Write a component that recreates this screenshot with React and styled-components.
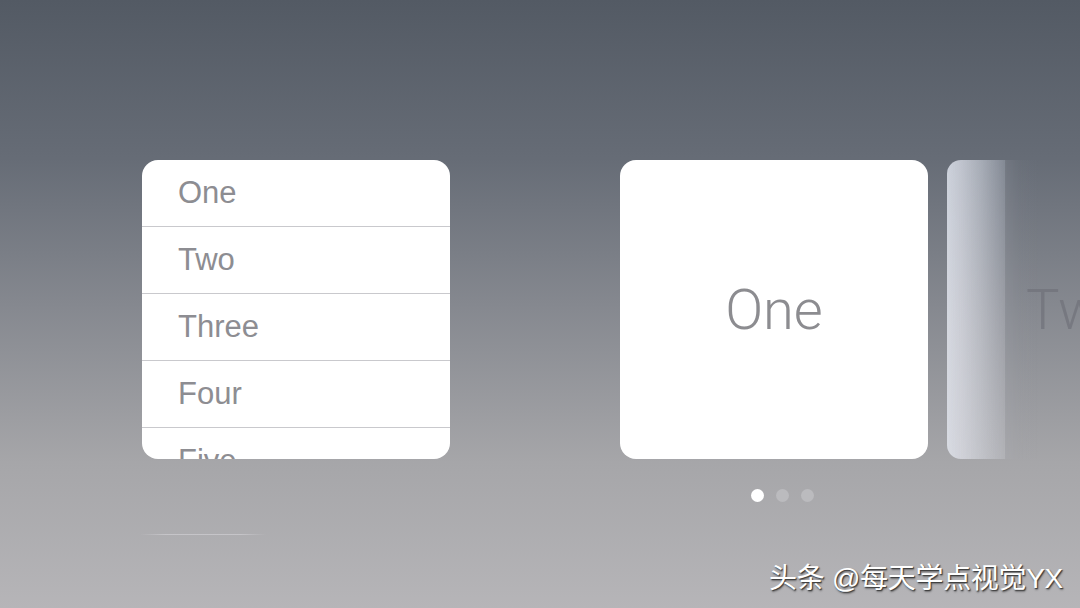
import React from 'react';
import styled, { createGlobalStyle } from 'styled-components';

const GlobalStyle = createGlobalStyle`
  html, body {
    margin: 0;
    padding: 0;
    width: 1080px;
    height: 608px;
    overflow: hidden;
  }
`

const Screen = styled.div`
  position: relative;
  width: 1080px;
  height: 608px;
  box-sizing: border-box;
  padding: 160px 0 0 142px;
  display: flex;
  gap: 170px;
  overflow: hidden;
  background: linear-gradient(180deg, #535a64 0%, #666c76 26%, #85888f 50%, #a6a6a9 76%, #b6b5b8 100%);
  font-family: "Liberation Sans", Arial, sans-serif;
`

const Column = styled.div`
  display: flex;
  flex-direction: column;
  flex-shrink: 0;
`

const ListPanel = styled.div`
  width: 308px;
  height: 299px;
  background: #fff;
  border-radius: 16px;
  overflow: hidden;
`

const Row = styled.div`
  height: 66px;
  box-sizing: content-box;
  border-bottom: 1px solid #c9c9cd;
  padding-left: 36px;
  display: flex;
  align-items: center;
  font-size: 31px;
  color: #8d8d92;
`

const Glint = styled.div`
  width: 126px;
  height: 1px;
  margin-top: 75px;
  margin-left: -2px;
  background: linear-gradient(90deg, rgba(200,199,203,0) 0%, rgba(200,199,203,0.9) 20%, rgba(200,199,203,0.9) 80%, rgba(200,199,203,0) 100%);
`

const Carousel = styled.div`
  display: flex;
  flex-direction: column;
  flex: 1;
  min-width: 0;
`

const Track = styled.div`
  display: flex;
  gap: 19px;
  overflow: hidden;
`

const Card = styled.div`
  flex-shrink: 0;
  width: 308px;
  height: 299px;
  border-radius: 16px;
  background: #fff;
  display: flex;
  align-items: center;
  justify-content: center;
  font-family: Roboto, "Liberation Sans", sans-serif;
  font-weight: 300;
  font-size: 56px;
  color: #8c8c90;
`

/* next card sliding in: only a glossy strip on its left edge is lit */
const PeekCard = styled(Card)`
  justify-content: flex-start;
  padding-left: 79px;
  box-sizing: border-box;
  color: rgba(112, 114, 122, 0.72);
  border-radius: 14px 0 0 14px;
  background:
    linear-gradient(180deg, rgba(190, 200, 215, 0.2) 0%, rgba(225, 225, 232, 0.16) 55%, rgba(238, 238, 242, 0.14) 100%),
    linear-gradient(90deg, rgba(214, 218, 226, 0.95) 0px, rgba(212, 214, 222, 0.82) 14px, rgba(200, 203, 211, 0.6) 34px, rgba(186, 189, 198, 0.35) 50px, rgba(176, 179, 188, 0.14) 60px, rgba(170, 173, 182, 0.05) 72px, rgba(170, 173, 182, 0) 92px);
  background-repeat: no-repeat;
  background-size: 58px 100%, 100% 100%;
`

const Dots = styled.div`
  display: flex;
  gap: 12px;
  margin-top: 30px;
  padding-left: 131px;
`

const Dot = styled.span`
  width: 13px;
  height: 13px;
  border-radius: 50%;
  background: ${p => (p.$active ? '#ffffff' : '#bbbbbe')};
`

const Watermark = styled.div`
  position: absolute;
  right: 17px;
  top: 556px;
  font-family: "Liberation Sans", "Noto Sans CJK SC", sans-serif;
  font-size: 28px;
  color: #fff;
  letter-spacing: -0.3px;
  text-shadow: 1px 1px 1px #3a3a3a, 1px 2px 2px rgba(0,0,0,0.35);
`

const items = ['One', 'Two', 'Three', 'Four', 'Five']

export default function App() {
  return (
    <>
      <GlobalStyle />
      <Screen>
        <Column>
          <ListPanel>
            {items.map((label) => (
              <Row key={label}>{label}</Row>
            ))}
          </ListPanel>
          <Glint />
        </Column>
        <Carousel>
          <Track>
            <Card>One</Card>
            <PeekCard>Two</PeekCard>
          </Track>
          <Dots>
            <Dot $active />
            <Dot />
            <Dot />
          </Dots>
        </Carousel>
        <Watermark>头条 @每天学点视觉YX</Watermark>
      </Screen>
    </>
  );
}
